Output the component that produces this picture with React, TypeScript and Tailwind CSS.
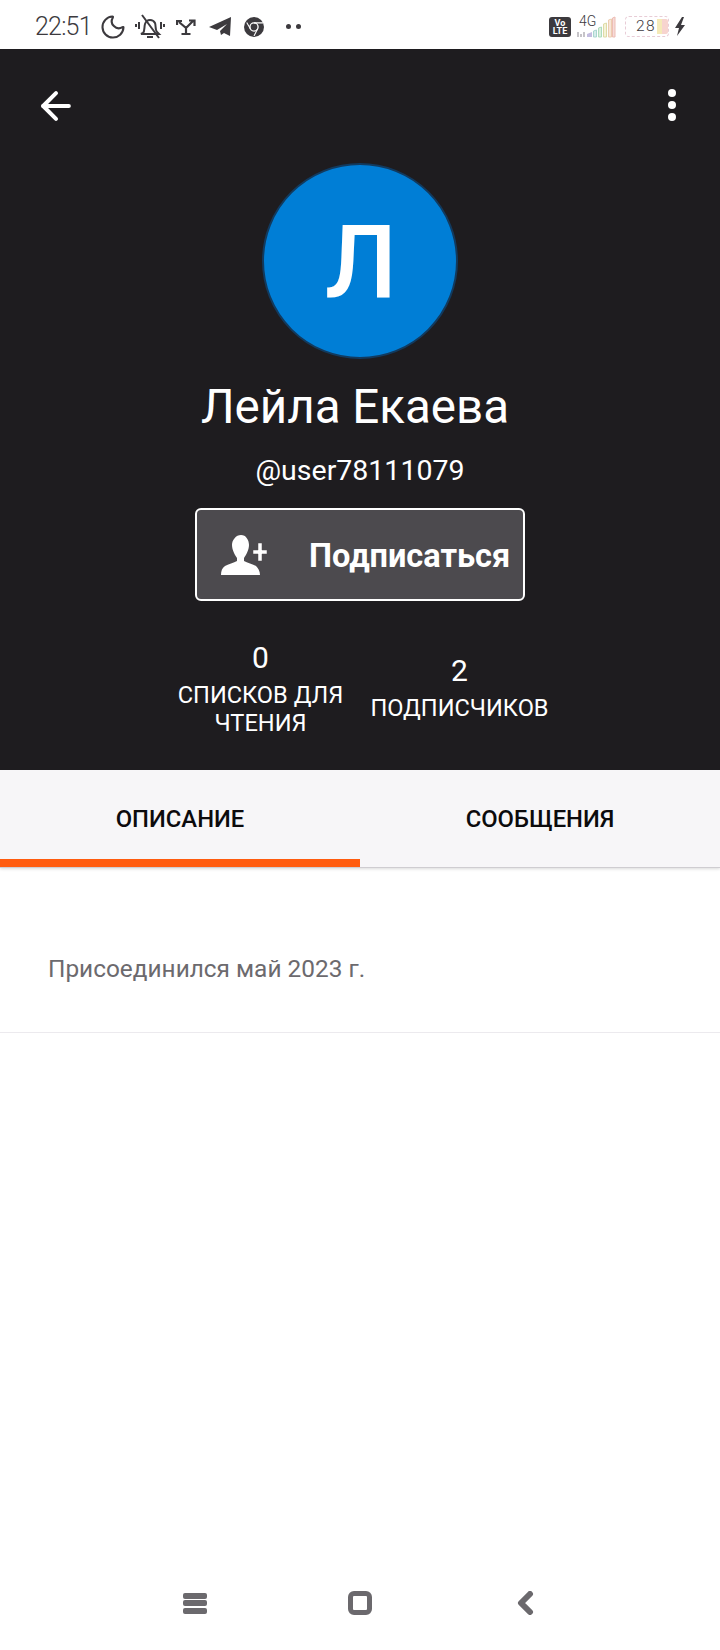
import React from 'react';
import { ArrowLeft, Moon } from 'lucide-react';

const StatusBar = () => (
  <div className="flex h-[49px] items-center justify-between bg-white pl-[35px] pr-[34px] pt-[4px] text-[#3c3a3e]">
    <div className="flex items-center">
      <span className="w-[60px] text-[25px] leading-none tracking-[-0.8px] font-['Roboto',sans-serif] font-light">22:51</span>
      <Moon size={28} strokeWidth={1.8} className="ml-[4px]" />
      {/* muted bell */}
      <svg width="30" height="26" viewBox="0 0 30 26" className="ml-[8px]" fill="none" stroke="currentColor" strokeWidth="2">
        <path d="M8 19c2-2 1-6 2-9s3-4 5-4 4 1 5 3 0 7 2 9l2 2H6z" />
        <path d="M12 23h6M7 1l17 23M4 8v7M1 10v3M26 8v7M29 10v3" />
      </svg>
      {/* fork arrows */}
      <svg width="20" height="16" viewBox="0 0 20 16" className="ml-[11px]" fill="none" stroke="currentColor" strokeWidth="2.2">
        <path d="M10 15V9L3 3M10 9l7-7M1 6V2h5M13 1.500h5.500V7M5.500 15h9" />
      </svg>
      {/* paper plane */}
      <svg width="23" height="19" viewBox="0 0 23 19" className="ml-[13px]" fill="currentColor">
        <path d="M0 10 22 0l-1 19-6-3-3 2-1-4 7-7-10 6z" />
      </svg>
      {/* browser badge */}
      <svg width="20" height="20" viewBox="0 0 22 22" className="ml-[12px]">
        <circle cx="11" cy="11" r="11" fill="currentColor" />
        <circle cx="11" cy="11" r="4.500" fill="none" stroke="#fff" strokeWidth="1.500" />
        <path d="M11 6.500h10M7 13 3 6M15 13l-4 8" stroke="#fff" strokeWidth="1.200" />
      </svg>
      <span className="ml-[22px] flex gap-[5px]">
        <span className="size-[5px] rounded-full bg-current" />
        <span className="size-[5px] rounded-full bg-current" />
      </span>
    </div>
    <div className="flex items-center">
      <div className="flex h-[20px] w-[22px] flex-col items-center justify-center rounded-[3px] bg-[#3c3a3e] text-[9px] leading-[8px] font-bold text-white font-['Roboto',sans-serif]">
        <span>Vo</span>
        <span>LTE</span>
      </div>
      {/* network label and rainbow bars */}
      <div className="relative ml-[6px] h-[22px] w-[39px]">
        <span className="absolute left-[2px] top-[-2px] text-[14px] leading-none font-light font-['Roboto',sans-serif]">4G</span>
        <svg width="39" height="22" viewBox="0 0 39 22" className="absolute left-0 top-0" fill="none" strokeWidth="1">
          <path d="M1 16v5M4 18v3M7 16v5" stroke="#c6c4c8" strokeWidth="2" />
          <path d="M10 18l5-2v5h-5z" fill="#c4bde0" />
          <path d="M16.500 21v-6l3-1v7z" fill="#d6ecea" stroke="#a9d6d0" />
          <path d="M21.500 21v-9l3-1v10z" fill="#dcf0e0" stroke="#aedcbc" />
          <path d="M26.500 21V8l3-1v14z" fill="#f4f2d8" stroke="#dedba6" />
          <path d="M31.500 21V4l3-1v18z" fill="#f8e6d8" stroke="#eccdb0" />
          <path d="M35.500 21V2l2.500-1v20z" fill="#f6dcd8" stroke="#edbdb5" />
        </svg>
      </div>
      {/* battery */}
      <div className="relative ml-[9px] flex h-[21px] w-[44px] items-center rounded-[4px] border border-dashed border-[#e8ccd6] pl-[10px]">
        <span className="text-[15.500px] leading-none tracking-[1.500px] font-light font-['Roboto',sans-serif]">28</span>
        <span className="ml-[1px] h-[15px] w-[5px] bg-[#f5eab8]" />
        <span className="h-[15px] w-[6px] rounded-r-[2px] bg-[#f7d4cf]" />
      </div>
      <svg width="12" height="20" viewBox="0 0 12 20" className="ml-[5px]" fill="currentColor">
        <path d="M8 0 1 11h4l-2 8 8-11H7l3-8z" />
      </svg>
    </div>
  </div>
);

const ProfileHeader = () => (
  <div className="relative flex h-[721px] flex-col items-center bg-[#1e1c1f] pt-[114px] text-white font-['Roboto',sans-serif]">
    <ArrowLeft size={44} strokeWidth={2.2} className="absolute left-[34px] top-[35px]" />
    <div className="absolute right-[44px] top-[40px] flex flex-col gap-[4px]">
      <span className="size-[8px] rounded-full bg-white" />
      <span className="size-[8px] rounded-full bg-white" />
      <span className="size-[8px] rounded-full bg-white" />
    </div>

    <div className="flex size-[196px] items-center justify-center rounded-full border-2 border-[#123a5e] bg-[#007ed6] pl-[2px] pt-[4px] text-[102px] leading-none font-medium">
      Л
    </div>
    <h1 className="mt-[18px] ml-[-10px] text-[47.500px] leading-[60px] font-normal">Лейла Екаева</h1>
    <p className="mt-[17px] text-[28.500px] leading-[34px]">@user78111079</p>

    <button className="mt-[20px] flex h-[93px] w-[330px] items-center rounded-[6px] border-2 border-white bg-[#4c4a4e]">
      <svg width="46" height="40" viewBox="0 0 46 40" className="ml-[24px]" fill="currentColor">
        <path d="M20 0c5 0 8 5 8 10 0 5-3 10-5 13v3c3 2 9 3 12 5 2 2 4 5 4 9H0c0-4 1-7 4-9 3-2 9-3 12-5v-3c-2-3-5-8-5-13 0-5 4-10 9-10z" />
        <path d="M32 15h5V8h4v7h5v4h-5v7h-4v-7h-5z" stroke="#4c4a4e" strokeWidth="0.500" />
      </svg>
      <span className="ml-[42px] pt-[3px] text-[32.500px] leading-none font-bold">Подписаться</span>
    </button>

    <div className="mt-[39px] flex items-start">
      <div className="flex w-[200px] flex-col items-center text-center">
        <span className="text-[30px] leading-[36px]">0</span>
        <span className="mt-[5px] text-[23.600px] leading-[28px]">СПИСКОВ ДЛЯ<br />ЧТЕНИЯ</span>
      </div>
      <div className="ml-[-1px] mt-[13px] flex w-[200px] flex-col items-center text-center">
        <span className="text-[30px] leading-[36px]">2</span>
        <span className="mt-[5px] text-[23.600px] leading-[28px]">ПОДПИСЧИКОВ</span>
      </div>
    </div>
  </div>
);

const Tabs = () => (
  <div className="flex h-[98px] border-b border-[#cfcdd1] bg-[#f7f6f8] text-[23.800px] font-medium font-['Roboto',sans-serif] text-[#0c0b0d] shadow-[0_1px_3px_rgba(0,0,0,0.15)]">
    <div className="flex w-1/2 items-center justify-center border-b-[8px] border-[#ff5c0f] pt-[11px]">ОПИСАНИЕ</div>
    <div className="flex w-1/2 items-center justify-center pt-[3px]">СООБЩЕНИЯ</div>
  </div>
);

const NavBar = () => (
  <div className="flex items-center pl-[183px] pt-[558px] text-[#6b696d]">
    <div className="flex w-[24px] flex-col gap-[1.500px]">
      <span className="h-[6px] rounded-[2px] bg-current" />
      <span className="h-[6px] rounded-[2px] bg-current" />
      <span className="h-[6px] rounded-[2px] bg-current" />
    </div>
    <div className="ml-[141px] size-[24px] rounded-[6px] border-[5px] border-current" />
    <svg width="18" height="24" viewBox="0 0 18 24" className="ml-[144px]" fill="none" stroke="currentColor" strokeWidth="6" strokeLinecap="round" strokeLinejoin="round">
      <path d="M14 3 5 12l9 9" />
    </svg>
  </div>
);

export default function App() {
  return (
    <div className="h-[1650px] w-[720px] overflow-hidden bg-white">
      <StatusBar />
      <ProfileHeader />
      <Tabs />
      <div className="flex h-[165px] items-center border-b border-[#eceaee] pl-[48px] pt-[39px] text-[24.400px] text-[#6c6a6e] font-['Roboto',sans-serif]">
        Присоединился май 2023 г.
      </div>
      <NavBar />
    </div>
  );
}
